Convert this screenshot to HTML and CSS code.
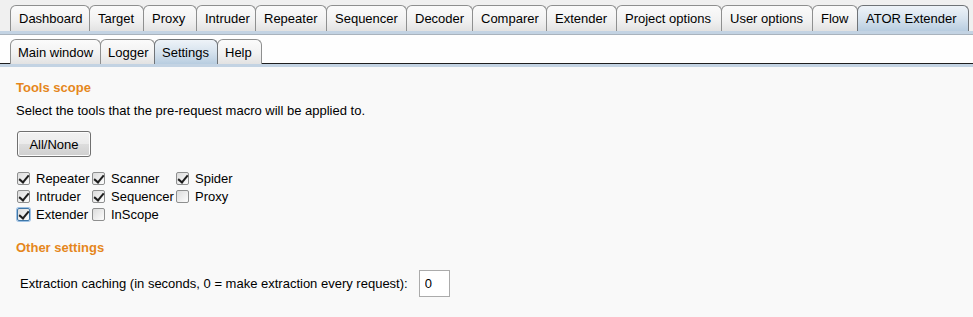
FILE: index.html
```html
<!DOCTYPE html>
<html lang="en">
<head>
    <meta charset="utf-8">
    <title>ATOR Extender - Settings</title>
    <link rel="stylesheet" href="styles.css">
</head>
<body>
    <!-- Main tool tabs -->
    <nav class="tabbar tabbar-main">
        <div class="tabs">
            <span class="tab">Dashboard</span>
            <span class="tab">Target</span>
            <span class="tab">Proxy</span>
            <span class="tab">Intruder</span>
            <span class="tab">Repeater</span>
            <span class="tab">Sequencer</span>
            <span class="tab">Decoder</span>
            <span class="tab">Comparer</span>
            <span class="tab">Extender</span>
            <span class="tab">Project options</span>
            <span class="tab">User options</span>
            <span class="tab">Flow</span>
            <span class="tab active">ATOR Extender</span>
        </div>
    </nav>

    <!-- Extension sub tabs -->
    <nav class="tabbar tabbar-sub">
        <div class="tabs">
            <span class="tab">Main window</span>
            <span class="tab">Logger</span>
            <span class="tab active">Settings</span>
            <span class="tab">Help</span>
        </div>
    </nav>

    <main class="panel">
        <section class="group">
            <h2 class="group-title">Tools scope</h2>
            <p class="hint">Select the tools that the pre-request macro will be applied to.</p>
            <button class="btn">All/None</button>

            <div class="tool-grid">
                <label class="check"><span class="box checked"></span>Repeater</label>
                <label class="check"><span class="box checked"></span>Scanner</label>
                <label class="check"><span class="box checked"></span>Spider</label>
                <label class="check"><span class="box checked"></span>Intruder</label>
                <label class="check"><span class="box checked"></span>Sequencer</label>
                <label class="check"><span class="box"></span>Proxy</label>
                <label class="check"><span class="box checked focus"></span>Extender</label>
                <label class="check"><span class="box"></span>InScope</label>
            </div>
        </section>

        <section class="group">
            <h2 class="group-title">Other settings</h2>
            <div class="field-row">
                <label for="caching">Extraction caching (in seconds, 0 = make extraction every request):</label>
                <input type="text" id="caching" class="field" value="0">
            </div>
        </section>
    </main>
</body>
</html>
```

FILE: styles.css
```css
:root {
    --orange: #e5871c;
    --tab-border: #8e8f8f;
    --strip-blue: #c3d3e3;
    --text: #000;
}

* {
    box-sizing: border-box;
    margin: 0;
    padding: 0;
}

body {
    font-family: Tahoma, 'Liberation Sans', 'DejaVu Sans', sans-serif;
    font-size: 13px;
    color: var(--text);
    background: #f9f9f9;
    width: 973px;
    height: 317px;
    overflow: hidden;
}

/* Tab bars */
.tabbar {
    padding: 0 5px 0 10px;
}

.tabbar-main {
    background: #f0f0f0;
    padding-top: 5px;
    border-bottom: 3px solid var(--strip-blue);
    box-shadow: 0 1px 0 #a9b3bd;
}

.tabbar-sub {
    background: #fefefe;
    padding-top: 4px;
    margin-top: 1px;
    border-bottom: 3px solid var(--strip-blue);
    box-shadow: inset 0 -1px 0 #1f1f1f;
}

.tabs {
    display: flex;
    align-items: flex-end;
}

.tab {
    height: 26px;
    line-height: 26px;
    padding: 0 8px 0 8px;
    border: 1px solid var(--tab-border);
    border-bottom: none;
    border-radius: 6px 6px 0 0;
    margin-right: -1px;
    background: linear-gradient(#fbfbfb, #f2f2f2 55%, #e2e2e2);
    white-space: nowrap;
}

.tabbar-main .tab:nth-child(1) { width: 80px; }
.tabbar-main .tab:nth-child(2) { width: 55px; }
.tabbar-main .tab:nth-child(3) { width: 54px; }
.tabbar-main .tab:nth-child(4) { width: 60px; }
.tabbar-main .tab:nth-child(5) { width: 72px; }
.tabbar-main .tab:nth-child(6) { width: 81px; }
.tabbar-main .tab:nth-child(7) { width: 67px; }
.tabbar-main .tab:nth-child(8) { width: 75px; }
.tabbar-main .tab:nth-child(9) { width: 71px; }
.tabbar-main .tab:nth-child(10) { width: 106px; }
.tabbar-main .tab:nth-child(11) { width: 92px; }
.tabbar-main .tab:nth-child(12) { width: 46px; }
.tabbar-main .tab:nth-child(13) { width: 112px; }

.tabbar-sub .tab {
    height: 25px;
    line-height: 25px;
    padding: 0 7px;
}

.tabbar-sub .tab:nth-child(1) { width: 91px; }
.tabbar-sub .tab:nth-child(2) { width: 55px; }
.tabbar-sub .tab:nth-child(3) { width: 64px; }
.tabbar-sub .tab:nth-child(4) { width: 45px; }

.tab.active {
    background: linear-gradient(#eef3f8, #d7e3ee 50%, #b8cde0);
    border-color: #6f7377;
    position: relative;
    z-index: 1;
}

/* Settings panel */
.panel {
    padding: 13px 16px 0 16px;
}

.group-title {
    color: var(--orange);
    font-size: 13px;
    font-weight: bold;
    line-height: 16px;
}

.hint {
    margin-top: 7px;
    line-height: 16px;
}

.btn {
    margin-top: 12px;
    margin-left: 1px;
    width: 74px;
    height: 26px;
    font-family: inherit;
    font-size: 13px;
    color: #000;
    border: 1px solid #707070;
    border-radius: 3px;
    background: linear-gradient(#f2f2f2, #ebebeb 50%, #dddddd 51%, #cfcfcf);
    box-shadow: inset 0 0 0 1px #fcfcfc;
}

.tool-grid {
    display: grid;
    grid-template-columns: 75px 84px auto;
    grid-auto-rows: 18px;
    margin-top: 12px;
    margin-left: 1px;
    width: 240px;
}

.check {
    display: flex;
    align-items: center;
    gap: 6px;
    white-space: nowrap;
}

.box {
    width: 13px;
    height: 13px;
    border: 1px solid #8e8f8f;
    border-radius: 2px;
    background: linear-gradient(135deg, #dcdcdc, #fdfdfd);
    position: relative;
    flex: none;
}

.box.checked::after {
    content: '';
    position: absolute;
    left: 3px;
    top: 0;
    width: 4px;
    height: 8px;
    border: solid #1e1e1e;
    border-width: 0 2px 2px 0;
    transform: rotate(40deg);
}

.box.focus {
    box-shadow: 0 0 0 1px #9ec1e4;
    border-color: #3f77a8;
}

.group + .group {
    margin-top: 17px;
}

.field-row {
    display: flex;
    align-items: center;
    gap: 11px;
    margin-top: 14px;
    padding-left: 4px;
}

.field {
    width: 31px;
    height: 27px;
    padding: 0 5px;
    font-family: inherit;
    font-size: 13px;
    border: 1px solid #ababab;
    background: #fff;
    outline: none;
}
```
